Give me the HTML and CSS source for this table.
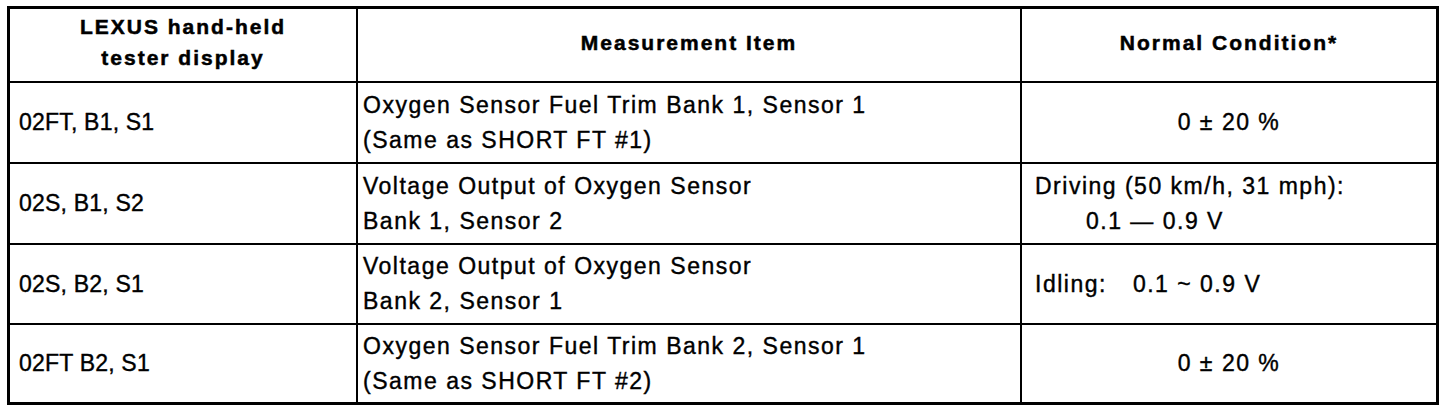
FILE: index.html
```html
<!DOCTYPE html>
<html lang="en">
<head>
<meta charset="utf-8">
<title>LEXUS hand-held tester display</title>
<link rel="stylesheet" href="styles.css">
</head>
<body>
<div class="page">
  <div class="grid">
    <div class="cell head c1">LEXUS hand-held<br>tester display</div>
    <div class="cell head c2">Measurement Item</div>
    <div class="cell head c3">Normal Condition*</div>

    <div class="cell c1">02FT, B1, S1</div>
    <div class="cell c2">Oxygen Sensor Fuel Trim Bank 1, Sensor 1<br>(Same as SHORT FT #1)</div>
    <div class="cell c3 center">0 ± 20 %</div>

    <div class="cell c1">02S, B1, S2</div>
    <div class="cell c2">Voltage Output of Oxygen Sensor<br>Bank 1, Sensor 2</div>
    <div class="cell c3"><div>Driving (50 km/h, 31 mph):</div><div class="indent">0.1 — 0.9 V</div></div>

    <div class="cell c1">02S, B2, S1</div>
    <div class="cell c2">Voltage Output of Oxygen Sensor<br>Bank 2, Sensor 1</div>
    <div class="cell c3"><div>Idling:<span class="gap">0.1 ~ 0.9 V</span></div></div>

    <div class="cell c1">02FT B2, S1</div>
    <div class="cell c2">Oxygen Sensor Fuel Trim Bank 2, Sensor 1<br>(Same as SHORT FT #2)</div>
    <div class="cell c3 center">0 ± 20 %</div>
  </div>
</div>
</body>
</html>
```
FILE: styles.css
```css
html, body {
  margin: 0;
  padding: 0;
  background: #fff;
}

.page {
  padding: 6px 0 0 7px;
}

.grid {
  width: 1432px;
  box-sizing: border-box;
  display: grid;
  grid-template-columns: 346px 662px 414px;
  grid-template-rows: 72px 79px 79px 78px 77px;
  gap: 2px;
  padding: 3px;
  background: #000;
  font-family: "Liberation Sans", Arial, sans-serif;
  color: #000;
}

.cell {
  background: #fff;
  display: flex;
  flex-direction: column;
  justify-content: center;
  font-size: 23px;
  line-height: 35px;
  box-sizing: border-box;
  -webkit-text-stroke: 0.4px #000;
}

.c1 {
  padding-left: 9px;
  letter-spacing: 0.2px;
}

.c2 {
  padding-left: 5px;
  letter-spacing: 1.5px;
}

.c3 {
  padding-left: 13px;
  letter-spacing: 1.5px;
}

.center {
  align-items: center;
  padding-left: 0;
}

.indent {
  padding-left: 51px;
}

.gap {
  margin-left: 26px;
}

.head {
  font-size: 21px;
  font-weight: bold;
  line-height: 31px;
  letter-spacing: 2px;
  text-align: center;
  align-items: center;
  padding: 0 0 6px 0;
  -webkit-text-stroke: 0.5px #000;
}
```
